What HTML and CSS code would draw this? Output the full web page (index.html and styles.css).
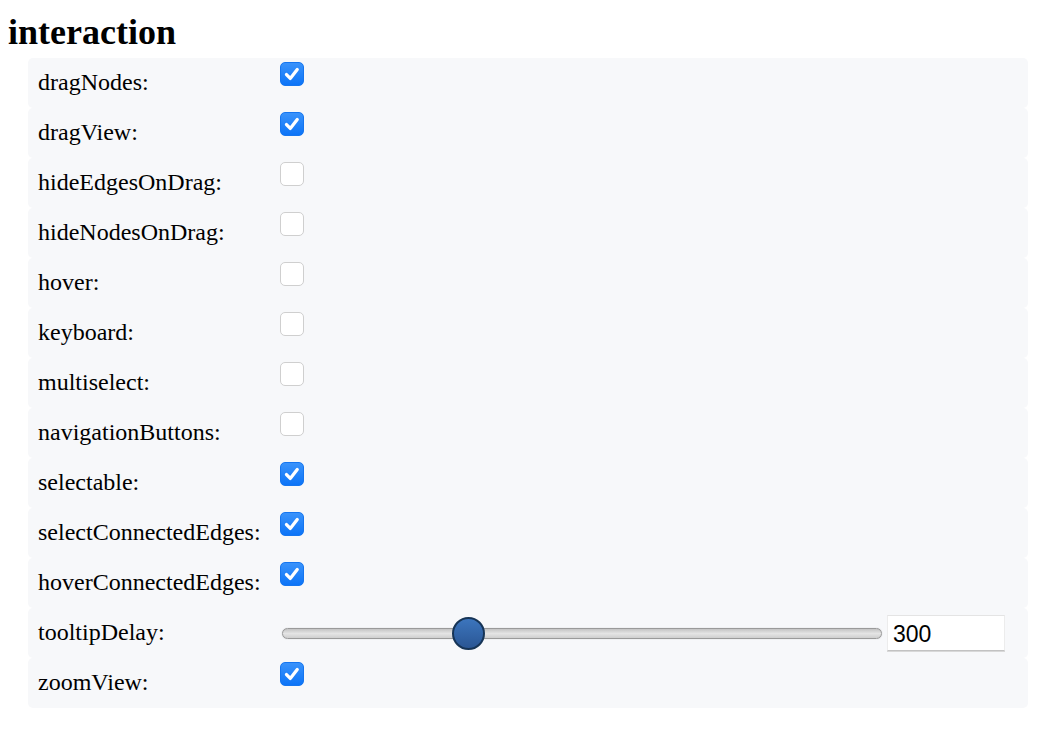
FILE: index.html
```html
<!DOCTYPE html>
<html>
<head>
<meta charset="utf-8">
<link rel="stylesheet" href="styles.css">
</head>
<body>
<h2 class="title">interaction</h2>
<div class="config">
  <div class="item"><div class="label">dragNodes:</div><span class="cb on"><svg viewBox="0 0 24 24"><path d="M6 12.6l4.1 4.2 7.6-9.6"/></svg></span></div>
  <div class="item"><div class="label">dragView:</div><span class="cb on"><svg viewBox="0 0 24 24"><path d="M6 12.6l4.1 4.2 7.6-9.6"/></svg></span></div>
  <div class="item"><div class="label">hideEdgesOnDrag:</div><span class="cb"></span></div>
  <div class="item"><div class="label">hideNodesOnDrag:</div><span class="cb"></span></div>
  <div class="item"><div class="label">hover:</div><span class="cb"></span></div>
  <div class="item"><div class="label">keyboard:</div><span class="cb"></span></div>
  <div class="item"><div class="label">multiselect:</div><span class="cb"></span></div>
  <div class="item"><div class="label">navigationButtons:</div><span class="cb"></span></div>
  <div class="item"><div class="label">selectable:</div><span class="cb on"><svg viewBox="0 0 24 24"><path d="M6 12.6l4.1 4.2 7.6-9.6"/></svg></span></div>
  <div class="item"><div class="label">selectConnectedEdges:</div><span class="cb on"><svg viewBox="0 0 24 24"><path d="M6 12.6l4.1 4.2 7.6-9.6"/></svg></span></div>
  <div class="item"><div class="label">hoverConnectedEdges:</div><span class="cb on"><svg viewBox="0 0 24 24"><path d="M6 12.6l4.1 4.2 7.6-9.6"/></svg></span></div>
  <div class="item">
    <div class="label">tooltipDelay:</div>
    <div class="range"><div class="track"><span class="thumb" style="left:31%"></span></div></div>
    <input class="num" type="text" value="300">
  </div>
  <div class="item"><div class="label">zoomView:</div><span class="cb on"><svg viewBox="0 0 24 24"><path d="M6 12.6l4.1 4.2 7.6-9.6"/></svg></span></div>
</div>
</body>
</html>
```
FILE: styles.css
```css
html, body {
  margin: 0;
  padding: 0;
  background: #ffffff;
}
body {
  margin: 8px;
  font-family: "Liberation Serif", "Times New Roman", serif;
  color: #000;
}
.title {
  margin: 4px 0 6px 0;
  font-size: 36px;
  line-height: 40px;
  font-weight: bold;
}
.config {
  margin-left: 20px;
  width: 1000px;
}
.item {
  display: flex;
  align-items: flex-start;
  height: 50px;
  background: #f7f8fa;
  border-radius: 5px;
}
.label {
  width: 242px;
  padding-left: 10px;
  font-size: 24px;
  line-height: 49px;
  white-space: nowrap;
}
.cb {
  box-sizing: border-box;
  display: block;
  width: 24px;
  height: 24px;
  margin-top: 4px;
  border: 1px solid #cfcfcf;
  border-radius: 5px;
  background: #ffffff;
}
.cb.on {
  border: 1px solid #1576f0;
  background: linear-gradient(#3a93fb, #0c74f7);
}
.cb svg {
  display: block;
  width: 22px;
  height: 22px;
  fill: none;
  stroke: #ffffff;
  stroke-width: 3.6;
  stroke-linecap: round;
  stroke-linejoin: round;
}
.range {
  width: 602px;
  height: 50px;
  display: flex;
  align-items: center;
  margin-left: 2px;
}
.track {
  position: relative;
  box-sizing: border-box;
  width: 600px;
  height: 11px;
  border: 1px solid #9a9a9a;
  border-radius: 6px;
  background: linear-gradient(#c4c4c4, #e4e4e4 50%, #cfcfcf);
  box-shadow: 0 0 1px rgba(0,0,0,0.3);
}
.thumb {
  position: absolute;
  top: 50%;
  width: 33px;
  height: 33px;
  box-sizing: border-box;
  margin-left: -16.5px;
  margin-top: -16.5px;
  border: 2px solid #163456;
  border-radius: 50%;
  background: linear-gradient(#3c75bd, #2a5694);
}
.num {
  box-sizing: border-box;
  width: 118px;
  height: 36px;
  margin: 7px 0 0 3px;
  padding: 2px 6px 0 5px;
  border: none;
  border-top: 1px solid #e4e4e4;
  border-left: 1px solid #ececec;
  border-right: 1px solid #ececec;
  border-bottom: 1px solid #c2c2c2;
  box-shadow: 0 1px 0 #d8d8d8;
  background: #ffffff;
  font-family: "Liberation Sans", Arial, sans-serif;
  font-size: 23px;
  color: #000;
  outline: none;
}
```
